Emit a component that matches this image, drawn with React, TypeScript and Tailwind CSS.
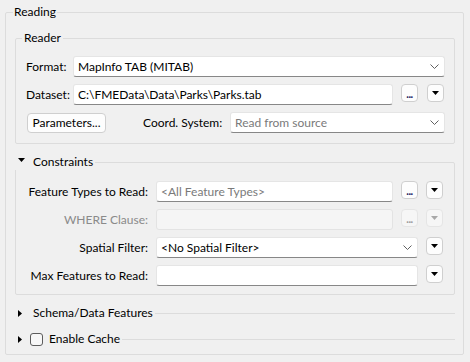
import type { ReactNode } from 'react';

function DownTri({ disabled = false, className = '' }: { disabled?: boolean; className?: string }) {
  return (
    <svg width="7" height="4" viewBox="0 0 7 4" className={className}>
      <polygon points="0,0 7,0 3.5,4" fill={disabled ? '#a8a8a8' : '#000'} />
    </svg>
  );
}

function RightTri() {
  return (
    <svg width="4" height="7" viewBox="0 0 4 7" className="flex-shrink-0">
      <polygon points="0,0 4,3.5 0,7" fill="#000" />
    </svg>
  );
}

function Chevron() {
  return (
    <svg width="9" height="5" viewBox="0 0 9 5" className="flex-shrink-0">
      <polyline points="0.5,0.5 4.5,4.5 8.5,0.5" fill="none" stroke="#606060" strokeWidth="1" />
    </svg>
  );
}

function Field({ children, muted = false, combo = false, disabled = false, className = '' }: {
  children?: ReactNode; muted?: boolean; combo?: boolean; disabled?: boolean; className?: string;
}) {
  const skin = disabled
    ? 'bg-[#f5f5f5] border-[#e3e3e3]'
    : 'bg-white border-[#e5e5e5] border-b-[#878787]';
  return (
    <div className={`h-[21px] flex items-center border rounded-[3px] pl-[4px] pr-[5px] ${skin} ${className}`}>
      <span className={`flex-1 min-w-0 truncate leading-[16px] ${muted ? 'text-[#7a7a7a]' : 'text-black'}`}>{children}</span>
      {combo && <Chevron />}
    </div>
  );
}

function SmallBtn({ kind, disabled = false, className = '' }: { kind: 'dots' | 'menu'; disabled?: boolean; className?: string }) {
  return (
    <div
      className={`w-[17px] h-[18px] flex-shrink-0 rounded-[4px] border flex justify-center ${
        disabled ? 'bg-[#f6f6f6] border-[#e5e5e5]' : 'bg-[#fdfdfd] border-[#cfcfcf]'
      } ${kind === 'dots' ? 'items-end' : 'items-center'} ${className}`}
    >
      {kind === 'dots' ? (
        <span className={`text-[11px] font-bold leading-[10px] tracking-[-0.5px] pb-[2px] ${disabled ? 'text-[#9a9a9a]' : 'text-[#202060]'}`}>...</span>
      ) : (
        <DownTri disabled={disabled} />
      )}
    </div>
  );
}

function CollapsedRow({ label, checkbox = false }: { label: string; checkbox?: boolean }) {
  return (
    <div className="flex items-center h-[16px] mt-[10px]">
      <div className="ml-[3px]"><RightTri /></div>
      {checkbox ? (
        <>
          <div className="ml-[8px] w-[13px] h-[13px] rounded-[3px] border border-[#5c5c5c] bg-[#f7f7f7] flex-shrink-0" />
          <span className="ml-[6px] leading-[16px]">{label}</span>
        </>
      ) : (
        <span className="ml-[11px] leading-[16px]">{label}</span>
      )}
      <div className="flex-1 h-px bg-[#dcdcdc] ml-[2px]" />
    </div>
  );
}

export default function App() {
  return (
    <div className="w-[470px] h-[362px] bg-[#f0f0f0] font-['Lato',sans-serif] text-[12px] text-black pt-[4px] pl-[5px] pr-[6px]">
      <fieldset className="border border-[#dcdcdc] rounded-[2px]">
        <legend className="ml-[7px] px-[1px] leading-[16px]">Reading</legend>
        <div className="flex flex-col pt-[10px] pl-[9px] pr-[8px] pb-[7px]">

          <fieldset className="border border-[#dcdcdc] rounded-[2px]">
            <legend className="ml-[6px] px-[2px] leading-[16px]">Reader</legend>
            <div className="flex flex-col gap-[7px] pt-[10px] pl-[10px] pr-[9px] pb-[10px]">
              <div className="flex items-center">
                <span className="w-[47px] flex-shrink-0">Format:</span>
                <Field combo className="flex-1">MapInfo TAB (MITAB)</Field>
              </div>
              <div className="flex items-start">
                <span className="w-[47px] flex-shrink-0 leading-[21px]">Dataset:</span>
                <Field className="flex-1">C:\FMEData\Data\Parks\Parks.tab</Field>
                <SmallBtn kind="dots" className="ml-[8px]" />
                <SmallBtn kind="menu" className="ml-[9px] mr-[1px]" />
              </div>
              <div className="flex items-start">
                <div className="ml-[1px] mt-[1px] w-[79px] h-[20px] flex-shrink-0 rounded-[4px] border border-[#cfcfcf] bg-[#fdfdfd] flex items-center justify-center leading-[16px]">
                  Parameters...
                </div>
                <span className="ml-[37px] w-[87px] flex-shrink-0 leading-[21px]">Coord. System:</span>
                <Field combo muted className="flex-1">Read from source</Field>
              </div>
            </div>
          </fieldset>

          <fieldset className="mt-[10px] border border-[#dcdcdc] rounded-[2px]">
            <legend className="-ml-[1px] pl-[3px] pr-[2px] bg-[#f0f0f0] flex items-center h-[16px]">
              <DownTri className="mb-[4px]" />
              <span className="ml-[8px] leading-[16px]">Constraints</span>
            </legend>
            <div className="grid grid-cols-[132px_1fr_17px_17px] gap-x-[8px] gap-y-[7px] items-start pt-[11px] pr-[11px] pb-[8px]">
              <span className="text-right leading-[21px]">Feature Types to Read:</span>
              <Field muted>&lt;All Feature Types&gt;</Field>
              <SmallBtn kind="dots" />
              <SmallBtn kind="menu" />

              <span className="text-right leading-[21px] text-[#8a8a8a]">WHERE Clause:</span>
              <Field disabled />
              <SmallBtn kind="dots" disabled />
              <SmallBtn kind="menu" disabled />

              <span className="text-right leading-[21px]">Spatial Filter:</span>
              <Field combo className="col-span-2">&lt;No Spatial Filter&gt;</Field>
              <SmallBtn kind="menu" />

              <span className="text-right leading-[21px]">Max Features to Read:</span>
              <Field className="col-span-2" />
              <SmallBtn kind="menu" />
            </div>
          </fieldset>

          <CollapsedRow label="Schema/Data Features" />
          <CollapsedRow label="Enable Cache" checkbox />
        </div>
      </fieldset>
    </div>
  );
}
